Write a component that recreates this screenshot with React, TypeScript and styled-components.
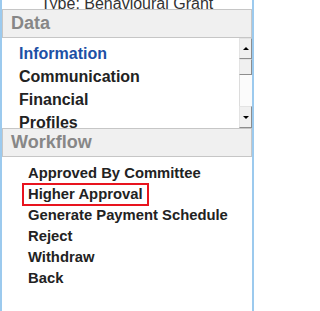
import React from "react";
import styled, { createGlobalStyle } from "styled-components";

const GlobalStyle = createGlobalStyle`
  html, body {
    margin: 0;
    padding: 0;
    background: #ffffff;
  }
  body {
    font-family: "Liberation Sans", Arial, sans-serif;
  }
`;

const Panel = styled.div`
  box-sizing: border-box;
  width: 254px;
  min-height: 311px;
  border-left: 2px solid #9ccaee;
  border-right: 2px solid #9ccaee;
  background: #ffffff;
  display: flex;
  flex-direction: column;
`;

const Title = styled.div`
  height: 9px;
  overflow: hidden;
  text-align: center;
  font-size: 16px;
  line-height: 16px;
  color: #333333;
  span {
    display: block;
    margin-top: -4px;
  }
`;

const SectionHeader = styled.div`
  height: 27px;
  border: 1px solid #c6c6c6;
  background: #f0f0f0;
  padding-left: 8px;
  font-size: 18px;
  font-weight: bold;
  line-height: 26px;
  color: #878787;
`;

const ListBox = styled.div`
  height: 90px;
  display: flex;
`;

const ListScroll = styled.div`
  flex: 1;
  overflow: hidden;
  padding: 4px 0 0 17px;
`;

const DataItem = styled.div<{ $active?: boolean }>`
  font-size: 16px;
  font-weight: bold;
  line-height: 23px;
  white-space: nowrap;
  color: ${(p) => (p.$active ? "#1d50a5" : "#222222")};
`;

const ScrollBar = styled.div`
  width: 13px;
  display: flex;
  flex-direction: column;
`;

const ScrollButton = styled.div<{ $h: number }>`
  box-sizing: border-box;
  height: ${(p) => p.$h}px;
  background: #f0f0f0;
  border-top: 1px solid #e3e3e3;
  border-left: 1px solid #e3e3e3;
  border-right: 1px solid #8d8d8d;
  border-bottom: 1px solid #8d8d8d;
  display: flex;
  align-items: center;
  justify-content: center;
`;

const Arrow = styled.span<{ $down?: boolean }>`
  width: 0;
  height: 0;
  border-left: 3px solid transparent;
  border-right: 3px solid transparent;
  ${(p) =>
    p.$down
      ? "border-top: 3px solid #000;"
      : "border-bottom: 3px solid #000;"}
`;

const Track = styled.div`
  flex: 1;
  box-sizing: border-box;
  background: #fbfbfb;
  border-left: 1px solid #dcdcdc;
`;

const Workflow = styled.div`
  padding: 6px 0 0 26px;
`;

const WorkflowItem = styled.div`
  font-size: 14.8px;
  font-weight: bold;
  line-height: 21px;
  color: #222222;
  white-space: nowrap;
`;

const Highlight = styled.span`
  display: inline-block;
  margin-left: -5px;
  padding: 0 5px 0 5px;
  outline: 2px solid #e8141e;
  outline-offset: -1px;
`;

const dataItems = ["Information", "Communication", "Financial", "Profiles"];
const workflowItems = [
  "Approved By Committee",
  "Higher Approval",
  "Generate Payment Schedule",
  "Reject",
  "Withdraw",
  "Back",
];

const App: React.FC = () => {
  return (
    <>
      <GlobalStyle />
      <Panel>
        <Title>
          <span>Type: Behavioural Grant</span>
        </Title>
        <SectionHeader>Data</SectionHeader>
        <ListBox>
          <ListScroll>
            {dataItems.map((item, i) => (
              <DataItem key={item} $active={i === 0}>
                {item}
              </DataItem>
            ))}
          </ListScroll>
          <ScrollBar>
            <ScrollButton $h={21}>
              <Arrow />
            </ScrollButton>
            <ScrollButton $h={16} />
            <Track />
            <ScrollButton $h={22}>
              <Arrow $down />
            </ScrollButton>
          </ScrollBar>
        </ListBox>
        <SectionHeader>Workflow</SectionHeader>
        <Workflow>
          {workflowItems.map((item) => (
            <WorkflowItem key={item}>
              {item === "Higher Approval" ? <Highlight>{item}</Highlight> : item}
            </WorkflowItem>
          ))}
        </Workflow>
      </Panel>
    </>
  );
};

export default App;
